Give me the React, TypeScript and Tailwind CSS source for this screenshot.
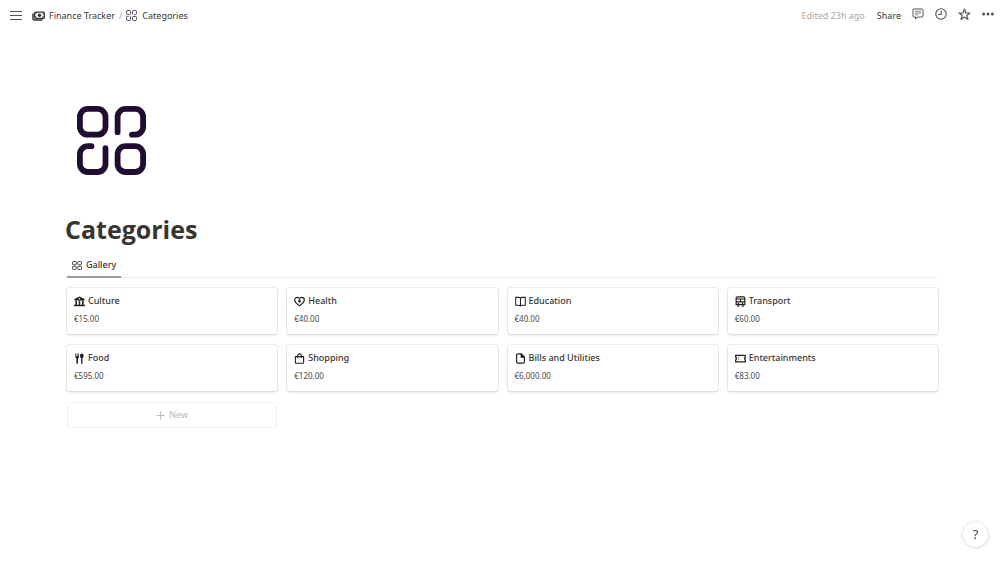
import React from "react";
import clsx from "clsx";

interface IconProps {
  className?: string;
}

interface Category {
  name: string;
  amount: string;
  icon: React.ComponentType<IconProps>;
}

const MenuIcon = ({ className }: IconProps) => (
  <svg viewBox="0 0 12 9" className={className} stroke="currentColor" strokeWidth="1">
    <path d="M0 0.500h12M0 4.500h12M0 8.500h12" />
  </svg>
);

const CashIcon = ({ className }: IconProps) => (
  <svg viewBox="0 0 26 20" className={className} fill="none" stroke="currentColor">
    <rect x="5.200" y="2.200" width="19.600" height="12.600" rx="2" strokeWidth="2.400" />
    <circle cx="15" cy="8.500" r="3.600" fill="currentColor" stroke="none" />
    <path d="M6 6.500q3 0 3-3.500M24 6.500q-3 0-3-3.500M6 10.500q3 0 3 3.500M24 10.500q-3 0-3 3.500" strokeWidth="1.600" />
    <path d="M2 5v10.500q0 2.500 2.500 2.500H21" strokeWidth="3" />
  </svg>
);

const CategoriesIcon = ({ className }: IconProps) => (
  <svg
    viewBox="0 0 69 69"
    className={className}
    fill="none"
    stroke="currentColor"
    strokeWidth="5.800"
    strokeLinecap="round"
    strokeLinejoin="round"
  >
    <rect x="2.900" y="2.900" width="25.600" height="25.800" rx="8" />
    <path d="M40.600 26.200V10.900a8 8 0 0 1 8-8h9.500a8 8 0 0 1 8 8v9.800a8 8 0 0 1-8 8H55" />
    <path d="M14.500 40.200h-3.600a8 8 0 0 0-8 8V58a8 8 0 0 0 8 8h9.600a8 8 0 0 0 8-8V42.200" />
    <rect x="40.600" y="40.200" width="25.500" height="25.800" rx="8" />
  </svg>
);

const CommentIcon = ({ className }: IconProps) => (
  <svg viewBox="0 0 24 24" className={className} fill="none" stroke="currentColor" strokeWidth="2" strokeLinejoin="round">
    <path d="M4 2h16a2 2 0 0 1 2 2v12a2 2 0 0 1-2 2h-8l-5 4v-4H4a2 2 0 0 1-2-2V4a2 2 0 0 1 2-2z" />
    <path d="M6 6.500h12M6 10h12M6 13.500h7" strokeWidth="1.400" />
  </svg>
);

const ClockIcon = ({ className }: IconProps) => (
  <svg viewBox="0 0 24 24" className={className} fill="none" stroke="currentColor" strokeWidth="2.200">
    <circle cx="12" cy="12" r="10.500" />
    <path d="M12.500 5.500V13H6.500" />
  </svg>
);

const StarIcon = ({ className }: IconProps) => (
  <svg viewBox="0 0 24 24" className={className} fill="none" stroke="currentColor" strokeWidth="2" strokeLinejoin="round">
    <path d="M12 1.800l2.600 7.400h7.600l-6.100 4.600 2.300 7.400-6.400-4.500-6.400 4.500 2.300-7.400-6.100-4.600h7.600z" />
  </svg>
);

const DotsIcon = ({ className }: IconProps) => (
  <svg viewBox="0 0 12 4" className={className} fill="currentColor">
    <circle cx="1.600" cy="2" r="1.500" />
    <circle cx="6" cy="2" r="1.500" />
    <circle cx="10.400" cy="2" r="1.500" />
  </svg>
);

const GalleryIcon = ({ className }: IconProps) => (
  <svg viewBox="0 0 20 18" className={className} fill="none" stroke="currentColor" strokeWidth="1.800">
    <rect x="1" y="1" width="7.500" height="6.500" rx="1.500" />
    <rect x="11.500" y="1" width="7.500" height="6.500" rx="1.500" />
    <rect x="1" y="10.500" width="7.500" height="6.500" rx="1.500" />
    <rect x="11.500" y="10.500" width="7.500" height="6.500" rx="1.500" />
  </svg>
);

const MuseumIcon = ({ className }: IconProps) => (
  <svg viewBox="0 0 24 24" className={className} fill="currentColor">
    <path fillRule="evenodd" d="M12 1l11 5.500V10H1V6.500zm0 3.500a1.700 1.700 0 1 0 0 3.400 1.700 1.700 0 0 0 0-3.400z" />
    <path d="M3 10h3.500v9H3zM10.300 10h3.400v9h-3.400zM17.500 10H21v9h-3.500zM0 19h24v3.500H0z" />
  </svg>
);

const HealthIcon = ({ className }: IconProps) => (
  <svg viewBox="0 0 24 24" className={className} fill="none" stroke="currentColor" strokeWidth="2.600" strokeLinejoin="round">
    <path d="M12 21.500C6 17 1.500 13.500 1.500 8.500 1.500 5.200 4 3 7 3c2.200 0 4 1 5 2.800C13 4 14.800 3 17 3c3 0 5.500 2.200 5.500 5.500 0 5-4.500 8.500-10.500 13z" />
    <path d="M12 7.500v7M8.500 11h7" strokeWidth="2.800" />
  </svg>
);

const BookIcon = ({ className }: IconProps) => (
  <svg viewBox="0 0 24 24" className={className} fill="none" stroke="currentColor" strokeWidth="2.200" strokeLinejoin="round">
    <path d="M12 5c-1-1.300-2.200-2-4-2H1.500v17H8c1.800 0 3 .5 4 2 1-1.500 2.200-2 4-2h6.500V3H16c-1.800 0-3 .7-4 2zM12 5v17" />
  </svg>
);

const TrainIcon = ({ className }: IconProps) => (
  <svg viewBox="0 0 24 24" className={className} fill="none" stroke="currentColor" strokeWidth="2.600" strokeLinejoin="round">
    <path d="M2.500 19V5q0-3 3-3h13q3 0 3 3v14zM3 6.500h18M3 13h18M12 6.500V13M5 22h4M15 22h4" />
    <path d="M6 16.200h3M15 16.200h3" />
  </svg>
);

const FoodIcon = ({ className }: IconProps) => (
  <svg viewBox="0 0 24 24" className={className} fill="currentColor">
    <path d="M3 1h1.500v6H6V1h1.800v6h1.500V1h1.500v8c0 1.500-.8 2.500-2.200 3v11.500H5.200V12C3.800 11.500 3 10.500 3 9z" />
    <path d="M17 1c2.500 0 4 2 4 5 0 2.600-1 4.500-2.500 5.200v12.300h-3V11.200C14 10.500 13 8.600 13 6c0-3 1.500-5 4-5z" />
  </svg>
);

const BagIcon = ({ className }: IconProps) => (
  <svg viewBox="0 0 24 24" className={className} fill="none" stroke="currentColor" strokeWidth="2.400" strokeLinejoin="round">
    <path d="M3 8h18v12.500q0 2-2 2H5q-2 0-2-2zM8 11V6a4 4 0 0 1 8 0v5" />
  </svg>
);

const FileIcon = ({ className }: IconProps) => (
  <svg viewBox="0 0 24 24" className={className} fill="none" stroke="currentColor" strokeWidth="2.600" strokeLinejoin="round">
    <path d="M13.500 2H6Q3.500 2 3.500 4.500v15Q3.500 22 6 22h12q2.500 0 2.500-2.500V9z" />
    <path d="M13.500 2v7h7z" fill="currentColor" />
  </svg>
);

const TicketIcon = ({ className }: IconProps) => (
  <svg viewBox="0 0 24 24" className={className} fill="none" stroke="currentColor" strokeWidth="2.800" strokeLinejoin="round">
    <path d="M1.500 5h21v4.500a3 3 0 0 0 0 5.500v4.500h-21V15a3 3 0 0 0 0-5.500z" />
    <path d="M8 9v2M8 13.500v2" strokeWidth="2" />
  </svg>
);

const PlusIcon = ({ className }: IconProps) => (
  <svg viewBox="0 0 9 9" className={className} stroke="currentColor" strokeWidth="1">
    <path d="M4.500 0.500v8M0.500 4.500h8" />
  </svg>
);

const categories: Category[] = [
  { name: "Culture", amount: "€15.00", icon: MuseumIcon },
  { name: "Health", amount: "€40.00", icon: HealthIcon },
  { name: "Education", amount: "€40.00", icon: BookIcon },
  { name: "Transport", amount: "€60.00", icon: TrainIcon },
  { name: "Food", amount: "€595.00", icon: FoodIcon },
  { name: "Shopping", amount: "€120.00", icon: BagIcon },
  { name: "Bills and Utilities", amount: "€6,000.00", icon: FileIcon },
  { name: "Entertainments", amount: "€83.00", icon: TicketIcon },
];

const IconButton = ({ label, className, children }: { label: string; className?: string; children: React.ReactNode }) => (
  <button type="button" aria-label={label} className={clsx("flex items-center text-[#55534e]", className)}>
    {children}
  </button>
);

const TopBar = () => (
  <header className="flex h-[31px] items-center justify-between pr-[11px] pl-[10px] text-[9px] leading-4">
    <nav aria-label="Breadcrumb" className="flex items-center">
      <IconButton label="Open sidebar" className="mr-[10px]">
        <MenuIcon className="h-[9px] w-3" />
      </IconButton>
      <a href="#finance" className="flex items-center gap-1">
        <CashIcon className="h-[10px] w-[13px]" />
        Finance Tracker
      </a>
      <span className="mx-1 text-[#a5a4a1]">/</span>
      <a href="#categories" className="flex items-center gap-[5px]">
        <CategoriesIcon className="size-[11px] text-[#4a3f58]" />
        Categories
      </a>
    </nav>
    <div className="flex items-center">
      <span className="mr-3 text-[#a9a8a5]">Edited 23h ago</span>
      <button type="button" className="mr-[11px]">Share</button>
      <div className="flex items-center gap-[11px] pb-[3px]">
        <IconButton label="Comments">
          <CommentIcon className="size-3" />
        </IconButton>
        <IconButton label="Updates">
          <ClockIcon className="size-3" />
        </IconButton>
        <IconButton label="Favorite">
          <StarIcon className="size-[13px]" />
        </IconButton>
        <IconButton label="More">
          <DotsIcon className="h-1 w-3" />
        </IconButton>
      </div>
    </div>
  </header>
);

const CategoryCard = ({ name, amount, icon: Icon }: Category) => (
  <a
    href="#category"
    className="flex h-[46px] flex-col rounded-[3px] px-[7px] pt-[6px] shadow-[0_0_0_1px_rgba(15,15,15,0.08),0_2px_3px_rgba(15,15,15,0.08)]"
  >
    <span className="flex items-center gap-[3px] text-[9px] leading-[14px] font-medium">
      <Icon className="size-[11px] text-[#22211f]" />
      {name}
    </span>
    <span className="mt-1 text-[8px] leading-[14px] text-[#4a4843]">{amount}</span>
  </a>
);

const App = () => {
  return (
    <div className="min-h-screen bg-white font-['Noto_Sans','Open_Sans',sans-serif] text-[#37352f]">
      <TopBar />

      <main className="px-[67px] pt-[75px]">
        <CategoriesIcon className="ml-[10px] size-[69px] text-[#200d31]" />
        <h1 className="-ml-[2px] mt-[35px] font-['Open_Sans',sans-serif] text-[25px] leading-[38px] font-bold">
          Categories
        </h1>

        <div className="mt-[6px] flex border-b border-[#ebebea]" role="tablist">
          <button
            type="button"
            role="tab"
            aria-selected="true"
            className="-mb-px flex h-[24px] items-center gap-1 border-b-2 border-[#9b9a97] px-[5px] text-[9px] font-medium"
          >
            <GalleryIcon className="h-[9px] w-[10px]" />
            Gallery
          </button>
        </div>

        <section className="mt-[10px] grid grid-cols-4 gap-x-[10px] gap-y-[11px]">
          {categories.map((category) => (
            <CategoryCard key={category.name} {...category} />
          ))}
          <button
            type="button"
            className="flex h-[26px] items-center justify-center gap-1 rounded-[3px] border border-[#efefee] text-[9px] text-[#bbbab8]"
          >
            <PlusIcon className="size-[9px]" />
            New
          </button>
        </section>
      </main>

      <button
        type="button"
        aria-label="Help"
        className="fixed right-[17px] bottom-[18px] size-[25px] rounded-full bg-white text-[12px] shadow-[0_0_0_1px_rgba(15,15,15,0.05),0_1px_4px_rgba(15,15,15,0.12)]"
      >
        ?
      </button>
    </div>
  );
};

export default App;
